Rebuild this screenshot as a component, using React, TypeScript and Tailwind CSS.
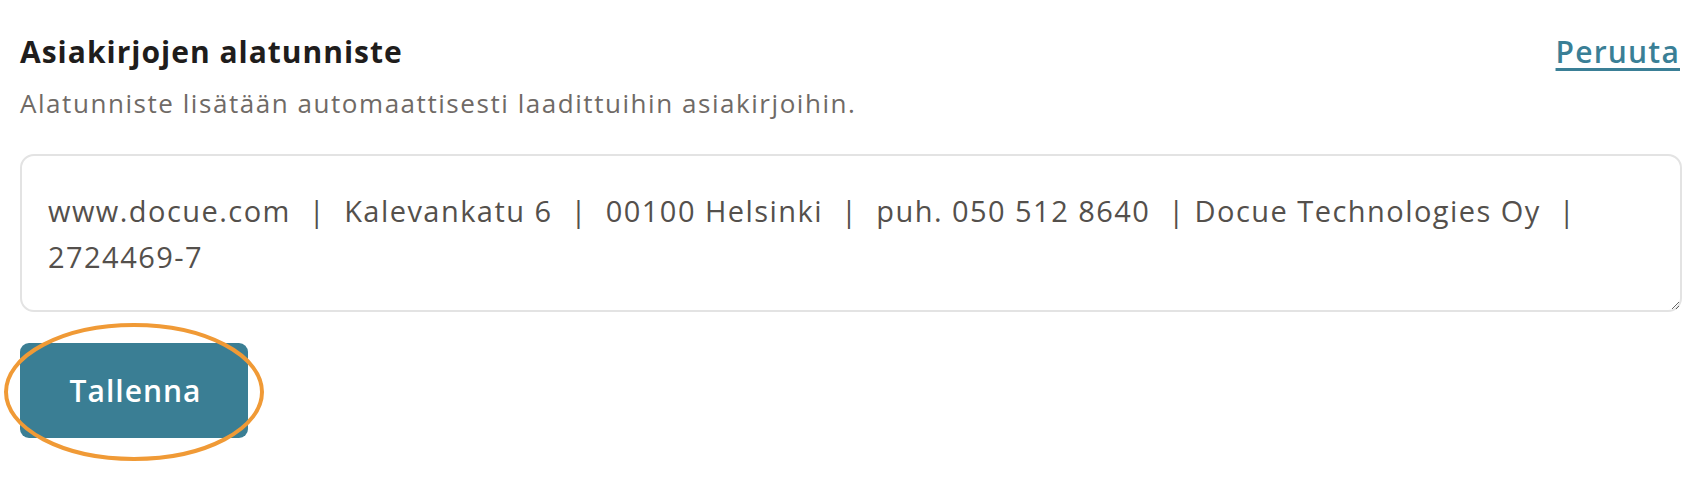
import React, { useState } from 'react';

const FOOTER_TEXT =
  'www.docue.com  |  Kalevankatu 6  |  00100 Helsinki  |  puh. 050 512 8640  | Docue Technologies Oy  |  2724469-7';

export default function App() {
  const [footer, setFooter] = useState(FOOTER_TEXT);

  return (
    <div
      className="min-h-screen bg-white pl-[20px] pr-[16px] pt-[30px]"
      style={{ fontFamily: '"Open Sans", "Noto Sans", sans-serif' }}
    >
      <div className="flex items-baseline justify-between">
        <h2 className="text-[30px] font-bold leading-[44px] tracking-[1px] text-[#1f1d1c]">
          Asiakirjojen alatunniste
        </h2>
        <button
          type="button"
          className="mr-[2px] text-[30px] font-semibold leading-[44px] tracking-[1.2px] text-[#3a7f96] underline decoration-[3px] underline-offset-[5px]"
        >
          Peruuta
        </button>
      </div>
      <p className="mt-[11px] text-[26px] leading-[36px] tracking-[1.55px] text-[#6f6a66]">
        Alatunniste lisätään automaattisesti laadittuihin asiakirjoihin.
      </p>

      <textarea
        value={footer}
        onChange={(e) => setFooter(e.target.value)}
        className="mt-[33px] block h-[158px] w-full rounded-[14px] border-2 border-[#e3e3e3] bg-white pl-[26px] pr-[26px] pt-[32px] text-[29px] leading-[46px] tracking-[1.45px] text-[#54504c] outline-none"
      />

      <div className="relative mt-[31px] w-[228px]">
        <button
          type="button"
          className="flex h-[95px] w-[228px] items-center justify-center rounded-[9px] bg-[#3a7e94] pl-[3px] text-[30px] font-semibold tracking-[1px] text-white"
        >
          Tallenna
        </button>
        {/* annotation ring */}
        <svg
          className="pointer-events-none absolute left-[-17px] top-[-21px]"
          width="264"
          height="142"
          viewBox="0 0 264 142"
        >
          <ellipse cx="131" cy="70" rx="128" ry="67" fill="none" stroke="#f09a36" strokeWidth="4" />
        </svg>
      </div>
    </div>
  );
}
